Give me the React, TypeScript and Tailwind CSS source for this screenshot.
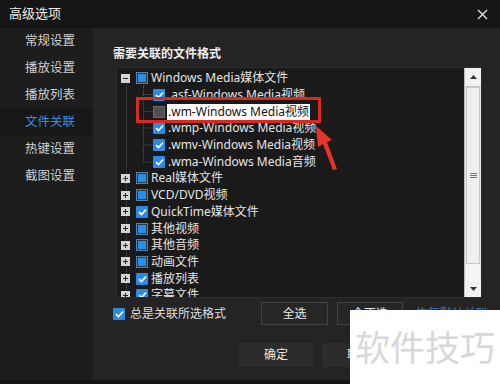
import React from "react";

const font = "font-['Noto_Sans','Noto_Sans_CJK_SC',sans-serif]";

type Mark = "checked" | "partial" | "empty";

const Box: React.FC<{ mark: Mark }> = ({ mark }) => {
  if (mark === "checked") {
    return (
      <span className="flex h-[12px] w-[12px] shrink-0 items-center justify-center rounded-[1px] bg-[#2a8ae6]">
        <svg width="9" height="8" viewBox="0 0 9 8">
          <path d="M1 4.2 L3.5 6.5 L8 1.5" fill="none" stroke="#fff" strokeWidth="1.7" />
        </svg>
      </span>
    );
  }
  if (mark === "partial") {
    return (
      <span className="flex h-[12px] w-[12px] shrink-0 items-center justify-center border border-[#5f7f9f] bg-[#2b3742]">
        <span className="h-[8px] w-[8px] bg-[#2390ee]" />
      </span>
    );
  }
  return <span className="h-[12px] w-[12px] shrink-0 border border-[#6a6a6a] bg-[#505050]" />;
};

const Expander: React.FC<{ open?: boolean }> = ({ open }) => (
  <span className="relative z-10 flex h-[9px] w-[9px] shrink-0 items-center justify-center bg-[#d4d4d4]">
    <span className="absolute h-[1px] w-[5px] bg-[#222]" />
    {!open && <span className="absolute h-[5px] w-[1px] bg-[#222]" />}
  </span>
);

const children: { label: string; mark: Mark; picked?: boolean }[] = [
  { label: ".asf-Windows Media视频", mark: "checked" },
  { label: ".wm-Windows Media视频", mark: "empty", picked: true },
  { label: ".wmp-Windows Media视频", mark: "checked" },
  { label: ".wmv-Windows Media视频", mark: "checked" },
  { label: ".wma-Windows Media音频", mark: "checked" },
];

const groups: { label: string; mark: Mark }[] = [
  { label: "Real媒体文件", mark: "partial" },
  { label: "VCD/DVD视频", mark: "partial" },
  { label: "QuickTime媒体文件", mark: "checked" },
  { label: "其他视频", mark: "partial" },
  { label: "其他音频", mark: "partial" },
  { label: "动画文件", mark: "partial" },
  { label: "播放列表", mark: "checked" },
  { label: "字幕文件", mark: "checked" },
];

const menu = ["常规设置", "播放设置", "播放列表", "文件关联", "热键设置", "截图设置"];

export default function App() {
  return (
    <div className={`relative h-[384px] w-[500px] overflow-hidden bg-[#151515] ${font} text-[12px] text-[#e4e4e4]`}>
      {/* title bar */}
      <div className="flex h-[28px] items-center justify-between pl-[9px] pr-[12px]">
        <span className="text-[13px] text-[#ececec]">高级选项</span>
        <svg width="11" height="11" viewBox="0 0 11 11">
          <path d="M1 1 L10 10 M10 1 L1 10" stroke="#e0e0e0" strokeWidth="1.4" />
        </svg>
      </div>

      <div className="flex h-[352px]">
        {/* sidebar */}
        <div className="w-[93px] shrink-0 bg-[#1d1d1d]">
          {menu.map((m) => (
            <div
              key={m}
              className={`flex h-[27px] items-center pl-[25px] text-[12.5px] ${
                m === "文件关联" ? "bg-[#171717] text-[#2f8ee8]" : "text-[#cfcfcf]"
              }`}
            >
              {m}
            </div>
          ))}
        </div>

        {/* content */}
        <div className="flex flex-1 flex-col bg-[#242424] pl-[20px] pt-[17px]">
          <div className="h-[18px] font-bold leading-[18px] text-[#eeeeee]">需要关联的文件格式</div>

          <div className="ml-[3px] mt-[4px] flex h-[231px] w-[366px] border border-[#2c2c2c] bg-[#1a1a1a]">
            <div className="relative flex-1 overflow-hidden pl-[4px] pt-[2px]">
              <svg className="absolute left-0 top-0" width="60" height="231">
                <path d="M9.5 17 V231" stroke="#555" strokeDasharray="1 1" />
                <path d="M26.5 17 V94 M26.5 26.5 H37 M26.5 43.5 H37 M26.5 60 H37 M26.5 77 H37 M26.5 94 H37" stroke="#555" strokeDasharray="1 1" />
              </svg>
              <div className="relative flex h-[16.7px] items-center">
                <Expander open />
                <span className="ml-[6px]"><Box mark="partial" /></span>
                <span className="ml-[3px] whitespace-nowrap">Windows Media媒体文件</span>
              </div>
              {children.map((c) => (
                <div key={c.label} className="relative flex h-[16.7px] items-center pl-[32px]">
                  <Box mark={c.mark} />
                  <span
                    className={`ml-[2px] whitespace-nowrap px-[1px] leading-[16px] ${
                      c.picked ? "bg-white text-[#111]" : ""
                    }`}
                  >
                    {c.label}
                  </span>
                </div>
              ))}
              {groups.map((g) => (
                <div key={g.label} className="relative flex h-[16.7px] items-center">
                  <Expander />
                  <span className="ml-[6px]"><Box mark={g.mark} /></span>
                  <span className="ml-[3px] whitespace-nowrap">{g.label}</span>
                </div>
              ))}
            </div>

            {/* scrollbar */}
            <div className="flex w-[17px] shrink-0 flex-col border-l border-[#bdbdbd] bg-[#e6e6e6]">
              <div className="flex h-[19px] items-center justify-center border-b border-[#c4c4c4] bg-[#f2f2f2]">
                <svg width="7" height="4" viewBox="0 0 7 4"><path d="M0 4 L3.5 0 L7 4Z" fill="#333" /></svg>
              </div>
              <div className="mx-[1px] flex flex-1 flex-col">
                <div className="flex h-[177px] items-center justify-center border border-[#c8c8c8] bg-[#efefef]">
                  <div className="flex w-[7px] flex-col gap-[1px]">
                    <span className="h-[1px] bg-[#777]" />
                    <span className="h-[1px] bg-[#777]" />
                    <span className="h-[1px] bg-[#777]" />
                  </div>
                </div>
                <div className="flex-1 bg-[#f4f4f4]" />
              </div>
              <div className="flex h-[16px] items-center justify-center bg-[#f2f2f2]">
                <svg width="7" height="4" viewBox="0 0 7 4"><path d="M0 0 L3.5 4 L7 0Z" fill="#333" /></svg>
              </div>
            </div>
          </div>

          {/* option row */}
          <div className="mt-[4px] flex h-[23px] items-center">
            <div className="flex w-[148px] items-center">
              <Box mark="checked" />
              <span className="ml-[5px] text-[#dedede]">总是关联所选格式</span>
            </div>
            <button className="flex h-[23px] w-[67px] items-center justify-center border border-[#444] bg-[#262626] text-[#e8e8e8]">
              全选
            </button>
            <button className="ml-[9px] flex h-[23px] w-[66px] items-center justify-center border border-[#444] bg-[#262626] text-[#e8e8e8]">
              全不选
            </button>
            <span className="ml-[13px] whitespace-nowrap text-[#2b7fd6]">恢复默认关联</span>
          </div>

          {/* dialog buttons */}
          <div className="mt-[18px] flex h-[24px] gap-[9px] pl-[126px]">
            <button className="flex w-[74px] items-center justify-center bg-[#2c2c2c] text-[#e8e8e8]">确定</button>
            <button className="flex w-[74px] items-center justify-center bg-[#2c2c2c] text-[#e8e8e8]">取消</button>
            <button className="flex w-[74px] items-center justify-center bg-[#2c2c2c] text-[#e8e8e8]">应用</button>
          </div>
        </div>
      </div>

      {/* annotation: red highlight box */}
      <div className="absolute left-[136px] top-[97px] h-[26px] w-[185px] border-[3px] border-[#d62a22]" />
      {/* annotation: arrow */}
      <svg className="absolute left-[310px] top-[122px]" width="32" height="52" viewBox="0 0 32 52">
        <path d="M6 4 L22 18 L17 20 L27 47 L23 48 L13 22 L8 25 Z" fill="#e8332b" />
      </svg>

      {/* watermark */}
      <div className="absolute left-[350px] top-[310px] flex h-[74px] w-[150px] items-center bg-white pl-[5px]">
        <span className="text-[35px] leading-none text-[#d8d8d8]">软件技巧</span>
      </div>
    </div>
  );
}
